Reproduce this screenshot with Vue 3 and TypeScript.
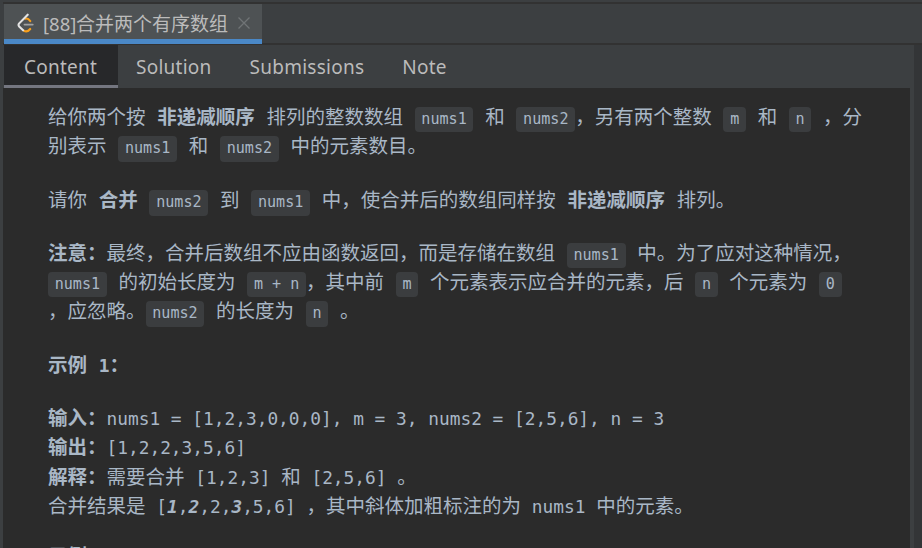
<script setup lang="ts">
import { ref } from 'vue'

type Kind = 'text' | 'bold' | 'chip' | 'mono' | 'strongMono' | 'emMono'
interface Segment {
  kind: Kind
  value: string
}
interface Block {
  pre?: boolean
  lines: Segment[][]
}

const t = (value: string): Segment => ({ kind: 'text', value })
const b = (value: string): Segment => ({ kind: 'bold', value })
const c = (value: string): Segment => ({ kind: 'chip', value })
const m = (value: string): Segment => ({ kind: 'mono', value })
const s = (value: string): Segment => ({ kind: 'strongMono', value })
const e = (value: string): Segment => ({ kind: 'emMono', value })

const tabs = ['Content', 'Solution', 'Submissions', 'Note']
const active = ref('Content')

const blocks: Block[] = [
  {
    lines: [
      [t('给你两个按 '), b('非递减顺序'), t(' 排列的整数数组 '), c('nums1'), t(' 和 '), c('nums2'), t('，另有两个整数 '), c('m'), t(' 和 '), c('n'), t(' ，分')],
      [t('别表示 '), c('nums1'), t(' 和 '), c('nums2'), t(' 中的元素数目。')],
    ],
  },
  {
    lines: [
      [t('请你 '), b('合并'), t(' '), c('nums2'), t(' 到 '), c('nums1'), t(' 中，使合并后的数组同样按 '), b('非递减顺序'), t(' 排列。')],
    ],
  },
  {
    lines: [
      [b('注意：'), t('最终，合并后数组不应由函数返回，而是存储在数组 '), c('nums1'), t(' 中。为了应对这种情况，')],
      [c('nums1'), t(' 的初始长度为 '), c('m + n'), t('，其中前 '), c('m'), t(' 个元素表示应合并的元素，后 '), c('n'), t(' 个元素为 '), c('0')],
      [t('，应忽略。'), c('nums2'), t(' 的长度为 '), c('n'), t(' 。')],
    ],
  },
  { lines: [[b('示例 '), s('1'), b('：')]] },
  {
    pre: true,
    lines: [
      [b('输入：'), m('nums1 = [1,2,3,0,0,0], m = 3, nums2 = [2,5,6], n = 3')],
      [b('输出：'), m('[1,2,2,3,5,6]')],
      [b('解释：'), t('需要合并 '), m('[1,2,3]'), t(' 和 '), m('[2,5,6]'), t(' 。')],
      [t('合并结果是 '), m('['), e('1'), m(','), e('2'), m(',2,'), e('3'), m(',5,6]'), t(' ，其中斜体加粗标注的为 '), m('nums1'), t(' 中的元素。')],
    ],
  },
  { lines: [[b('示例 '), s('2'), b('：')]] },
]
</script>

<template>
  <div class="window">
    <header class="editor-tabs">
      <div class="file-tab">
        <svg class="logo" viewBox="0 0 18 20" width="18" height="20" fill="none" stroke-linecap="round">
          <path d="M8.3 5.7Q11 4.8 13.2 8M6.8 17.6Q10.3 19.6 13.2 16" stroke="#f89f1b" stroke-width="2.2" />
          <path d="M10.7 1.7L2 10.6Q1 12 2.2 13.5L6.1 17.3" stroke="#e3e3e3" stroke-width="2.1" />
          <path d="M7.5 11.6H15.7" stroke="#a0a1a2" stroke-width="1.9" />
        </svg>
        <span class="file-name"><span class="file-id">[88]</span>合并两个有序数组</span>
        <svg class="close" viewBox="0 0 12 12" width="12" height="12">
          <path d="M.5 .5L11.5 11.5M11.5 .5L.5 11.5" stroke="#707476" stroke-width="1.3" />
        </svg>
      </div>
    </header>
    <section class="panel">
      <nav class="tabs">
        <button
          v-for="tab in tabs"
          :key="tab"
          class="tab"
          :class="{ active: tab === active }"
          @click="active = tab"
        >{{ tab }}</button>
      </nav>
      <main class="content">
        <div v-for="(block, i) in blocks" :key="i" class="block" :class="{ pre: block.pre }">
          <div v-for="(line, j) in block.lines" :key="j" class="line"><span v-for="(seg, k) in line" :key="k" :class="seg.kind">{{ seg.value }}</span></div>
        </div>
      </main>
    </section>
  </div>
</template>

<style>
body {
  background: #323232;
  overflow: hidden;
}
</style>

<style scoped>
.window {
  box-sizing: border-box;
  width: 922px;
  height: 548px;
  display: flex;
  flex-direction: column;
  overflow: hidden;
  background: #333537;
  border-top: 2px solid #3c3f41;
  border-left: 3px solid #3c3f41;
}
.editor-tabs {
  box-sizing: border-box;
  flex: none;
  height: 43px;
  padding-left: 1px;
  background: #3c3f41;
  border-top: 2px solid #323232;
  border-bottom: 2px solid #323232;
}
.file-tab {
  box-sizing: border-box;
  display: flex;
  align-items: center;
  width: 258px;
  height: 40px;
  padding-left: 13px;
  background: #4e5254;
  border-bottom: 5px solid #4a88c7;
}
.logo {
  flex: none;
  margin-right: 8px;
  margin-top: 2px;
}
.file-name {
  flex: none;
  width: 186px;
  font: 19px/35px "Noto Sans CJK SC", sans-serif;
  color: #bbb;
  white-space: nowrap;
  padding-top: 3px;
}
.file-id {
  display: inline-block;
  width: 33px;
  font-family: "Noto Sans", sans-serif;
  font-size: 18.5px;
}
.close {
  margin: 3px 0 0 9px;
}
.panel {
  flex: 1;
  min-height: 0;
  width: 911px;
  display: flex;
  flex-direction: column;
  background: #3c3f41;
}
.tabs {
  flex: none;
  display: flex;
  height: 43px;
  padding-left: 1px;
}
.tab {
  box-sizing: border-box;
  height: 43px;
  margin: 0;
  padding: 4px 19px 0 19px;
  border: 0;
  border-bottom: 3px solid transparent;
  background: none;
  color: #bbb;
  font: 19px/36px "Noto Sans", sans-serif;
  letter-spacing: 0.25px;
}
.tab.active {
  width: 114px;
  padding-left: 20px;
  padding-right: 0;
  text-align: left;
  background: #27282a;
  border-bottom-color: #747680;
}
.tab.active + .tab {
  padding-left: 18px;
}
.content {
  flex: 1;
  min-height: 0;
  box-sizing: border-box;
  width: 907px;
  padding: 12.8px 0 0 45px;
  overflow: hidden;
  background: #2b2b2b;
  color: #a9b7c6;
  font: 19.5px/29.25px "Noto Sans CJK SC", sans-serif;
}
.block {
  margin-bottom: 24.2px;
  word-spacing: 7.35px;
}
.block:first-child {
  margin-bottom: 24.8px;
}
.block:nth-child(2) {
  margin-bottom: 23.4px;
}
.block.pre {
  margin-bottom: 21px;
  word-spacing: 6.4px;
}
.line {
  height: 29.25px;
  white-space: pre;
}
.bold {
  font-weight: 700;
}
.mono,
.strongMono,
.emMono {
  font-family: "DejaVu Sans Mono", monospace;
  font-size: 17.82px;
  line-height: 1;
  word-spacing: 0;
}
.strongMono {
  font-weight: 700;
}
.emMono {
  font-weight: 700;
  font-style: italic;
}
.chip {
  display: inline-block;
  box-sizing: border-box;
  height: 25.5px;
  padding: 0 6.7px;
  border-radius: 4px;
  background: #3b3d3f;
  font: 15.1px/25.5px "DejaVu Sans Mono", monospace;
  word-spacing: 0;
}
</style>
